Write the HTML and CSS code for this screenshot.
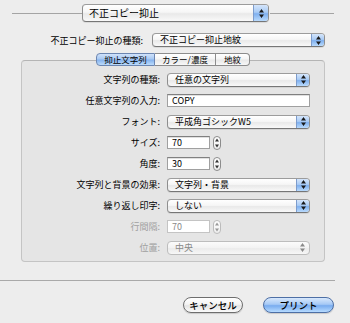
FILE: index.html
```html
<!DOCTYPE html>
<html lang="ja">
  <head>
    <meta charset="UTF-8" />
    <title>不正コピー抑止</title>
    <link rel="stylesheet" href="styles.css">
  </head>
  <body>
    <div class="top-row">
      <span class="rule rule-left"></span>
      <div class="popup popup-large">
        <span class="popup-text">不正コピー抑止</span>
        <span class="cap"><svg width="5" height="9" viewBox="0 0 5 9"><path d="M0 3.6L2.5 0 5 3.6z M0 5.4L2.5 9 5 5.4z" fill="#1a1a1a"/></svg></span>
      </div>
      <span class="rule rule-right"></span>
    </div>

    <div class="kind-row">
      <label class="kind-label">不正コピー抑止の種類:</label>
      <div class="popup kind-popup">
        <span class="popup-text">不正コピー抑止地紋</span>
        <span class="cap"><svg width="5" height="9" viewBox="0 0 5 9"><path d="M0 3.6L2.5 0 5 3.6z M0 5.4L2.5 9 5 5.4z" fill="#1a1a1a"/></svg></span>
      </div>
    </div>

    <div class="panel">
      <div class="tabs">
        <span class="tab tab-active tab-1">抑止文字列</span>
        <span class="tab tab-2">カラー/濃度</span>
        <span class="tab tab-3">地紋</span>
      </div>

      <div class="form">
        <label class="form-label">文字列の種類:</label>
        <div class="popup">
          <span class="popup-text">任意の文字列</span>
          <span class="cap"><svg width="5" height="9" viewBox="0 0 5 9"><path d="M0 3.6L2.5 0 5 3.6z M0 5.4L2.5 9 5 5.4z" fill="#1a1a1a"/></svg></span>
        </div>

        <label class="form-label">任意文字列の入力:</label>
        <div class="field">COPY</div>

        <label class="form-label">フォント:</label>
        <div class="popup">
          <span class="popup-text">平成角ゴシックW5</span>
          <span class="cap"><svg width="5" height="9" viewBox="0 0 5 9"><path d="M0 3.6L2.5 0 5 3.6z M0 5.4L2.5 9 5 5.4z" fill="#1a1a1a"/></svg></span>
        </div>

        <label class="form-label">サイズ:</label>
        <div class="number">
          <div class="field field-small">70</div>
          <span class="stepper"><svg width="4" height="10" viewBox="0 0 4 10"><path d="M0 3.4L2 0.6 4 3.4z M0 6.6L2 9.4 4 6.6z" fill="#333"/></svg></span>
        </div>

        <label class="form-label">角度:</label>
        <div class="number">
          <div class="field field-small">30</div>
          <span class="stepper"><svg width="4" height="10" viewBox="0 0 4 10"><path d="M0 3.4L2 0.6 4 3.4z M0 6.6L2 9.4 4 6.6z" fill="#333"/></svg></span>
        </div>

        <label class="form-label">文字列と背景の効果:</label>
        <div class="popup">
          <span class="popup-text">文字列・背景</span>
          <span class="cap"><svg width="5" height="9" viewBox="0 0 5 9"><path d="M0 3.6L2.5 0 5 3.6z M0 5.4L2.5 9 5 5.4z" fill="#1a1a1a"/></svg></span>
        </div>

        <label class="form-label">繰り返し印字:</label>
        <div class="popup">
          <span class="popup-text">しない</span>
          <span class="cap"><svg width="5" height="9" viewBox="0 0 5 9"><path d="M0 3.6L2.5 0 5 3.6z M0 5.4L2.5 9 5 5.4z" fill="#1a1a1a"/></svg></span>
        </div>

        <label class="form-label disabled">行間隔:</label>
        <div class="number disabled">
          <div class="field field-small">70</div>
          <span class="stepper"><svg width="4" height="10" viewBox="0 0 4 10"><path d="M0 3.4L2 0.6 4 3.4z M0 6.6L2 9.4 4 6.6z" fill="#999"/></svg></span>
        </div>

        <label class="form-label disabled">位置:</label>
        <div class="popup disabled">
          <span class="popup-text">中央</span>
          <span class="cap"><svg width="5" height="9" viewBox="0 0 5 9"><path d="M0 3.6L2.5 0 5 3.6z M0 5.4L2.5 9 5 5.4z" fill="#8a8a8a"/></svg></span>
        </div>
      </div>
    </div>

    <div class="separator"></div>

    <div class="buttons">
      <button type="button" class="button">キャンセル</button>
      <button type="button" class="button button-default">プリント</button>
    </div>
  </body>
</html>
```

FILE: styles.css
```css
* {
  margin: 0;
  padding: 0;
  box-sizing: border-box;
}
body {
  font-family: "Noto Sans CJK JP", "Liberation Sans", sans-serif;
  font-size: 9px;
  color: #000;
  background: #ededed;
  width: 350px;
  height: 323px;
  overflow: hidden;
}
.top-row {
  display: flex;
  align-items: center;
  padding: 4px 0 0 12px;
}
.rule {
  height: 0;
  border-top: 1px solid #a4a4a4;
}
.rule-left {
  width: 70px;
}
.rule-right {
  width: 64px;
  margin-left: 1px;
}
.popup {
  display: flex;
  height: 14px;
  border: 1px solid #8e8e8e;
  border-top-color: #9c9c9c;
  border-bottom-color: #767676;
  border-radius: 4px;
  background: linear-gradient(#ffffff, #f6f6f6 45%, #e9e9e9 55%, #f9f9f9);
  overflow: hidden;
  box-shadow: 0 1px 0 rgba(0, 0, 0, 0.08);
}
.popup-text {
  flex: 1;
  padding-left: 7px;
  line-height: 12px;
  white-space: nowrap;
}
.cap {
  width: 13px;
  display: flex;
  align-items: center;
  justify-content: center;
  border-left: 1px solid #7d9ccc;
  background: linear-gradient(#d4e5fb, #a9cbf5 45%, #7fb0ef 55%, #b9dafc);
}
.popup-large {
  width: 187px;
  height: 18px;
}
.popup-large .popup-text {
  font-size: 10px;
  line-height: 16px;
  padding-left: 6px;
}
.popup-large .cap {
  width: 15px;
}
.kind-row {
  display: flex;
  align-items: center;
  margin-top: 11px;
}
.kind-label {
  width: 143px;
  margin-right: 9px;
  text-align: right;
}
.kind-popup {
  width: 173px;
}
.panel {
  margin: 13px 25px 0 21px;
  height: 202px;
  border: 1px solid #c4c4c4;
  border-top-color: #b4b4b4;
  border-radius: 4px;
  background: #e5e5e5;
}
.tabs {
  display: flex;
  justify-content: center;
  margin-top: -8px;
}
.tab {
  height: 13px;
  line-height: 11px;
  font-size: 8.5px;
  text-align: center;
  border: 1px solid #8c8c8c;
  border-left: none;
  background: linear-gradient(#ffffff, #f5f5f5 45%, #e8e8e8 55%, #f8f8f8);
}
.tab-1 {
  width: 59px;
  border-left: 1px solid #7d8fae;
  border-radius: 4px 0 0 4px;
}
.tab-2 {
  width: 61px;
}
.tab-3 {
  width: 34px;
  border-radius: 0 4px 4px 0;
}
.tab-active {
  border-color: #6c86b1;
  background: linear-gradient(#d0e2fa, #a8c9f3 45%, #86b3ee 55%, #bcdcfc);
}
.form {
  display: grid;
  grid-template-columns: 138px 143px;
  grid-auto-rows: 21px;
  column-gap: 7px;
  align-items: center;
  margin-top: 3px;
}
.form-label {
  text-align: right;
  white-space: nowrap;
}
.field {
  height: 13px;
  line-height: 12px;
  padding-left: 4px;
  background: #fff;
  border: 1px solid #a0a0a0;
  border-top-color: #808080;
  box-shadow: inset 0 1px 0 #e0e0e0;
}
.number {
  display: flex;
  align-items: center;
  gap: 3px;
}
.field-small {
  width: 43px;
}
.stepper {
  width: 8px;
  height: 14px;
  display: flex;
  align-items: center;
  justify-content: center;
  border: 1px solid #8c8c8c;
  border-radius: 4px;
  background: linear-gradient(#ffffff, #eeeeee);
}
.disabled {
  color: #a0a0a0;
}
.number.disabled .field {
  color: #8a8a8a;
  border-color: #c4c4c4;
  box-shadow: none;
}
.number.disabled .stepper {
  border-color: #bcbcbc;
}
.popup.disabled {
  color: #8a8a8a;
  border-color: #bdbdbd;
  box-shadow: none;
  background: linear-gradient(#fbfbfb, #f2f2f2 50%, #ebebeb 55%, #f7f7f7);
}
.popup.disabled .cap {
  border-left: none;
  background: none;
}
.separator {
  width: 335px;
  margin-top: 18px;
  border-top: 1px solid #a9a9a9;
}
.buttons {
  display: flex;
  justify-content: flex-end;
  gap: 20px;
  padding-right: 16px;
  margin-top: 16px;
}
.button {
  font-family: inherit;
  font-size: 9.5px;
  font-weight: 500;
  height: 16px;
  line-height: 13px;
  width: 60px;
  border: 1px solid #6e6e6e;
  border-radius: 8px;
  color: #000;
  background: linear-gradient(#ffffff, #f4f4f4 45%, #e4e4e4 55%, #fbfbfb);
  box-shadow: 0 1px 1px rgba(0, 0, 0, 0.15);
}
.button-default {
  width: 71px;
  border-color: #4d6fa5;
  background: linear-gradient(#d8e8fc, #a6c9f5 45%, #79acef 55%, #b6dbff);
}
```
